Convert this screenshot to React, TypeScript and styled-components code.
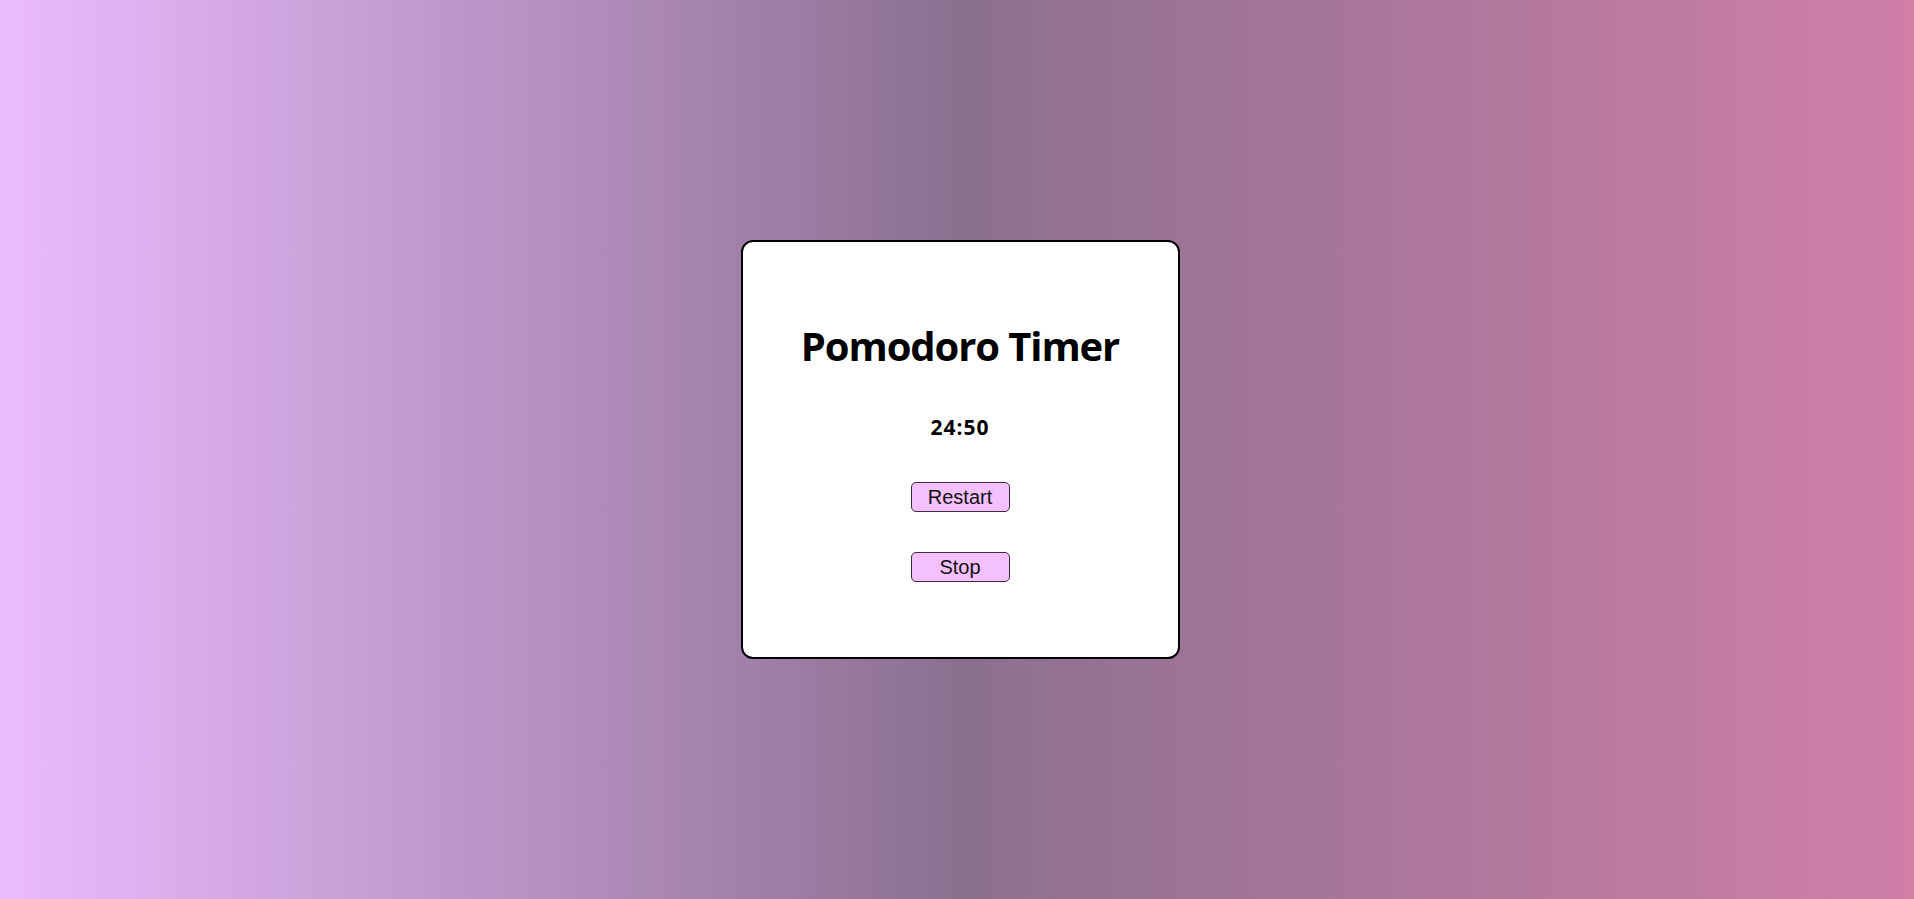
import React from "react";
import styled, { createGlobalStyle } from "styled-components";

const Global = createGlobalStyle`
  html, body { margin: 0; padding: 0; height: 100%; }
  body {
    background: linear-gradient(to right, #ebbbff 0%, #8b7090 50%, #d07fa7 100%);
    font-family: "Open Sans", "Noto Sans", sans-serif;
  }
  #root { height: 100%; }
`;

const Page = styled.main`
  box-sizing: border-box;
  width: 100%;
  height: 100vh;
  padding-left: 6px;
  display: flex;
  align-items: center;
  justify-content: center;
`;

const Card = styled.section`
  box-sizing: border-box;
  width: 439px;
  height: 419px;
  padding-top: 5px;
  background: #ffffff;
  border: 2px solid #000;
  border-radius: 12px;
  display: flex;
  flex-direction: column;
  align-items: center;
  justify-content: center;
`;

const Title = styled.h1`
  margin: 0 0 45px;
  font-family: "Open Sans", sans-serif;
  font-weight: 700;
  font-size: 40px;
  line-height: 48px;
  color: #000;
  letter-spacing: -1.1px;
`;

const Time = styled.div`
  margin: 0 0 43px;
  font-family: "Open Sans", sans-serif;
  font-weight: 700;
  font-size: 21px;
  line-height: 24px;
  letter-spacing: 1px;
  color: #000;
`;

const Controls = styled.div`
  display: flex;
  flex-direction: column;
  align-items: center;
  gap: 40px;
`;

const Button = styled.button`
  box-sizing: border-box;
  width: 99px;
  height: 30px;
  padding: 0;
  background: #f5c0ff;
  border: 1px solid #3a2a3a;
  border-radius: 5px;
  font-family: "Liberation Sans", Arial, sans-serif;
  font-size: 20px;
  color: #111;
  cursor: pointer;
`;

export default function App() {
  return (
    <>
      <Global />
      <Page>
        <Card>
          <Title>Pomodoro Timer</Title>
          <Time>24:50</Time>
          <Controls>
            <Button>Restart</Button>
            <Button>Stop</Button>
          </Controls>
        </Card>
      </Page>
    </>
  );
}
